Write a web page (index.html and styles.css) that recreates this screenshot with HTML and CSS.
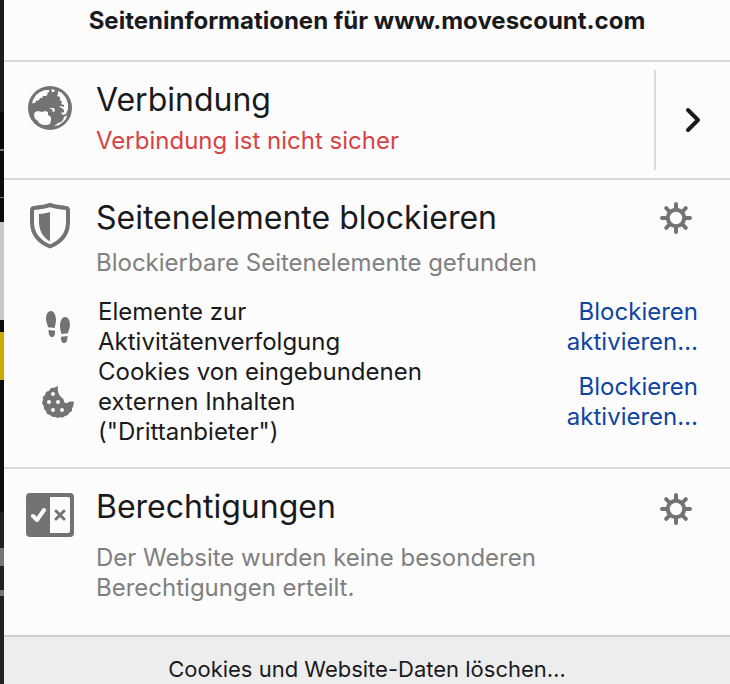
FILE: index.html
```html
<!DOCTYPE html>
<html lang="de">
<head>
<meta charset="utf-8">
<meta name="viewport" content="width=device-width, initial-scale=1">
<title>Seiteninformationen</title>
<link rel="stylesheet" href="styles.css">
</head>
<body>
<svg class="sprite" width="0" height="0" aria-hidden="true">
  <symbol id="gear" viewBox="0 0 32 32">
    <circle cx="16" cy="16" r="8.2" fill="none" stroke="currentColor" stroke-width="4"/>
    <path d="M16 2v5M16 25v5M2 16h5M25 16h5M6.2 6.2l3.600 3.600M22.200 22.200l3.600 3.600M6.200 25.800l3.600-3.600M22.200 9.800l3.600-3.600" stroke="currentColor" stroke-width="4" stroke-linecap="round"/>
  </symbol>
</svg>
<div class="window">
  <div class="backdrop"></div>
  <main class="panel">
    <header class="title"><h1>Seiteninformationen für www.movescount.com</h1></header>

    <section class="section connection">
      <svg class="icon" viewBox="0 0 48 48" aria-hidden="true">
        <circle cx="24" cy="24" r="22" fill="#737373"/>
        <g fill="#fcfcfc">
          <path d="M6 20l1-4 3-5 4-3 5-2 4 0 0 2-2 1 1 1-2 2-3 0-1 2-2 0-1 2-3 1-1 2-2 0Z"/>
          <path d="m25 5 4 1-1 2h-3l1-1Z"/>
          <path d="m32 7 4 2 4 5 2 6 0 5-2 5-3 1-2-2 3-1 0-2-2-2-3-1 2-1 3 1 0-2-3-1 1-2-2-2 0-3-3-1 1-2Z"/>
          <path d="m9 28 3-1 4 1 3-1 3 1 0 3 3 2 0 3-1 4-3 1-4 0-4-2-2-3-2-1-1-4Z"/>
          <path d="m28 42 4-3 3-1 2-2 1-3 3-2-1 4-3 3-4 3-5 1Z"/>
          <path d="m23 25 2-1 3 0 1 3-2 1-1-1 1-1-2-1Z"/>
        </g>
      </svg>
      <div class="copy">
        <h2>Verbindung</h2>
        <p class="warning">Verbindung ist nicht sicher</p>
      </div>
      <button class="more" type="button" aria-label="Verbindungsdetails anzeigen">
        <svg viewBox="0 0 16 26" aria-hidden="true"><path d="m3 3 10 10L3 23" fill="none" stroke="currentColor" stroke-width="4" stroke-linecap="round" stroke-linejoin="round"/></svg>
      </button>
    </section>

    <section class="section blocking">
      <svg class="icon" viewBox="0 0 48 48" aria-hidden="true">
        <path d="M24 3c6 2 11 2.500 16 3 1.300.2 2 1 2 2.200V20c0 12-6 19.500-18 24.500C12 39.500 6 32 6 20V8.200C6 7 6.700 6.200 8 6c5-.5 10-1 16-3Z" fill="none" stroke="#737373" stroke-width="4" stroke-linejoin="round"/>
        <path d="M24 10v29.500c-7-4-11-11-11-20V12c4-.2 8-.8 11-2Z" fill="#737373"/>
      </svg>
      <div class="copy">
        <h2>Seitenelemente blockieren</h2>
        <p class="muted">Blockierbare Seitenelemente gefunden</p>
      </div>
      <button class="settings" type="button" aria-label="Einstellungen zum Blockieren"><svg viewBox="0 0 32 32" aria-hidden="true"><use href="#gear"/></svg></button>
      <ul class="items">
        <li>
          <svg class="small" viewBox="0 0 32 32" aria-hidden="true" fill="#737373">
            <path d="M9 0c3 0 5 4 5 9 0 3-.8 5-1.400 8l-6.600-.7C5.500 13 4 11 4 8c0-5 2-8 5-8Z"/>
            <path d="m6.500 19 6.500.7c.3 4-1 6.300-3 6.300-2.400 0-3.500-2.500-3.500-7Z"/>
            <path d="M23 6c3 0 5 3 5 8 0 3-1.500 5-2 8.300l-6.600.7C18.800 20 18 18 18 15c0-5 2-9 5-9Z"/>
            <path d="m19 25.700 6.500-.7c0 4.500-1.100 7-3.500 7-2 0-3.300-2.300-3-6.300Z"/>
          </svg>
          <span>Elemente zur Aktivitätenverfolgung</span>
          <a href="#tracking">Blockieren aktivieren…</a>
        </li>
        <li>
          <svg class="small" viewBox="0 0 32 32" aria-hidden="true">
            <path fill="#737373" d="M16 0c-.8 5 .5 8.500 3 11 1.500 1.500 3 2 3 4 .3 2 2.400 3 4 1.600 1.500-1.300 4-1.300 6-.6l-1 5-1 1v3l-3 2-1 2-3 1-2 1.500-3-.2-2 .7-3-1-3-.3-2-1.700-3-1-1-3-2-2-.3-3L0 17l1-3-.2-3L3 9l1-3 3-1.300L9 2l3-.2Z"/>
            <g fill="#fcfcfc"><circle cx="11" cy="8" r="2"/><circle cx="7" cy="16" r="2"/><circle cx="16" cy="16" r="2"/><circle cx="11" cy="24" r="2"/><circle cx="20" cy="24" r="2"/></g>
          </svg>
          <span>Cookies von eingebundenen externen Inhalten ("Drittanbieter")</span>
          <a href="#cookies">Blockieren aktivieren…</a>
        </li>
      </ul>
    </section>

    <section class="section permissions">
      <svg class="icon" viewBox="0 0 48 48" aria-hidden="true">
        <rect y="2" width="48" height="44" rx="4" fill="#737373"/>
        <path d="M24 6h18q2 0 2 2v32q0 2-2 2H24Z" fill="#fcfcfc"/>
        <path d="m7 25 4 4 7-10" fill="none" stroke="#fcfcfc" stroke-width="4" stroke-linecap="round" stroke-linejoin="round"/>
        <path d="m30 20 8 8m0-8-8 8" stroke="#737373" stroke-width="3" stroke-linecap="round"/>
      </svg>
      <div class="copy">
        <h2>Berechtigungen</h2>
        <p class="muted">Der Website wurden keine besonderen Berechtigungen erteilt.</p>
      </div>
      <button class="settings" type="button" aria-label="Einstellungen zu Berechtigungen"><svg viewBox="0 0 32 32" aria-hidden="true"><use href="#gear"/></svg></button>
    </section>

    <button class="clear" type="button">Cookies und Website-Daten löschen…</button>
  </main>
</div>
</body>
</html>
```
FILE: styles.css
```css
* { box-sizing: border-box; }
body {
  margin: 0;
  background: #fcfcfc;
  color: #1a1a1c;
  font-family: Inter, "Liberation Sans", sans-serif;
  font-size: 24px;
  line-height: 30px;
}
h1, h2, p, ul { margin: 0; padding: 0; }
h1 { font-size: 24px; line-height: 30px; font-weight: 700; }
h2 { font-size: 32px; line-height: 40px; font-weight: 400; }
button { margin: 0; padding: 0; border: 0; background: none; color: inherit; font: inherit; cursor: pointer; }
svg { display: block; }
.sprite { position: absolute; }
.window { display: grid; grid-template-columns: 4px 1fr; min-height: 100vh; }
.backdrop {
  background: linear-gradient(
    #1c1a16 0 112px, #0b0a06 112px 149px, #77756f 149px 151px,
    #0d0b07 151px 197px, #77756f 197px 198px, #0d0b07 198px 222px,
    #c9c9c9 222px 320px, #0d0b07 320px 332px, #cba900 332px 380px,
    #100e08 380px 512px, #24211d 512px 548px, #77756f 548px 566px,
    #24211d 566px 590px, #77756f 590px 596px, #24211d 596px);
}
.panel { display: flex; flex-direction: column; }
.title { padding: 6px 0 24px; text-align: center; }
.section {
  display: grid;
  grid-template-columns: 48px 1fr auto;
  column-gap: 22px;
  align-items: start;
  padding: 18px 38px 18px 22px;
  border-top: 2px solid #d9d9d9;
}
.icon { width: 48px; height: 48px; margin-top: 4px; }
.warning { color: #d74345; }
.muted { color: #808080; }
.connection { padding: 8px 0 8px 22px; }
.connection .icon { margin-top: 14px; }
.connection .copy { padding: 10px 0; }
.connection p { margin-top: 6px; }
.more { display: flex; align-items: center; justify-content: center; align-self: stretch; width: 76px; height: 100px; border-left: 2px solid #d9d9d9; }
.more svg { width: 16px; height: 26px; }
.settings { margin-top: 4px; color: #737373; }
.settings svg { width: 32px; height: 32px; }
.blocking .copy p { margin-top: 10px; }
.blocking { padding-bottom: 20px; }
.items { grid-column: 1 / -1; margin: 19px -6px 0 0; list-style: none; }
.items li { display: grid; grid-template-columns: 32px 1fr 132px; column-gap: 24px; padding-left: 16px; }
.items span { max-width: 340px; }
.items a { color: #0f44a0; text-align: right; text-decoration: none; }
.items li + li { align-items: center; }
.small { width: 32px; height: 32px; margin-top: 14px; }
.items li + li .small { margin-top: 0; }
.permissions .settings { margin-top: 6px; }
.permissions .copy p { margin-top: 16px; }
.permissions { padding-bottom: 32px; }
.clear { flex: 1; min-height: 48px; padding: 16px 0 0; border-top: 2px solid #cecece; background: #ededed; font-size: 22px; }
```
